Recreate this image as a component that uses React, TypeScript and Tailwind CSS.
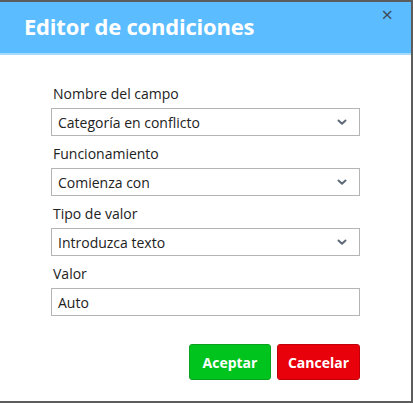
import React from "react";

function Chevron() {
  return (
    <svg width="10" height="7" viewBox="0 0 10 7" className="shrink-0">
      <path d="M1.5 1.5 L5 4.8 L8.5 1.5" fill="none" stroke="#5f6b78" strokeWidth="2" strokeLinecap="round" strokeLinejoin="round" />
    </svg>
  );
}

function SelectField({ label, value }: { label: string; value: string }) {
  return (
    <div className="flex flex-col">
      <div className="h-[20px] leading-[20px] text-[14px] text-[#222] pl-[2px]">{label}</div>
      <div className="mt-[4px] h-[28px] border border-[#b4b4b4] bg-white flex items-center justify-between pl-[6px] pr-[12px] text-[14px] text-[#222]">
        <span>{value}</span>
        <Chevron />
      </div>
    </div>
  );
}

export default function App() {
  return (
    <div
      className="w-[413px] h-[403px] bg-white border-t-2 border-r-2 border-b-2 border-[#5c5c5c] flex flex-col box-border"
      style={{ fontFamily: '"Open Sans", "Noto Sans", sans-serif' }}
    >
      <div className="h-[51px] bg-[#5bbcff] border-b-2 border-[#a6dbff] flex items-start justify-between pl-[24px] pr-[18px] box-content">
        <div className="text-white font-bold text-[22px] leading-none pt-[13px] tracking-[-0.2px]">Editor de condiciones</div>
        <div className="text-[#3d4a57] text-[20px] leading-none pt-[3px]">×</div>
      </div>
      <div className="flex flex-col pl-[51px] pr-[51px] pt-[29px] gap-[8px]">
        <SelectField label="Nombre del campo" value="Categoría en conflicto" />
        <SelectField label="Funcionamiento" value="Comienza con" />
        <SelectField label="Tipo de valor" value="Introduzca texto" />
        <div className="flex flex-col">
          <div className="h-[20px] leading-[20px] text-[14px] text-[#222] pl-[2px]">Valor</div>
          <div className="mt-[4px] h-[28px] border border-[#b4b4b4] bg-white flex items-center pl-[6px] text-[14px] text-[#222]">
            Auto
          </div>
        </div>
        <div className="flex justify-end gap-[6px] mt-[20px]">
          <div className="w-[82px] h-[36px] rounded-[3px] bg-[#00c41e] border border-[#0aa020] flex items-center justify-center text-white font-bold text-[14px]">
            Aceptar
          </div>
          <div className="w-[83px] h-[36px] rounded-[3px] bg-[#e8000b] border border-[#c2000a] flex items-center justify-center text-white font-bold text-[14px]">
            Cancelar
          </div>
        </div>
      </div>
    </div>
  );
}
